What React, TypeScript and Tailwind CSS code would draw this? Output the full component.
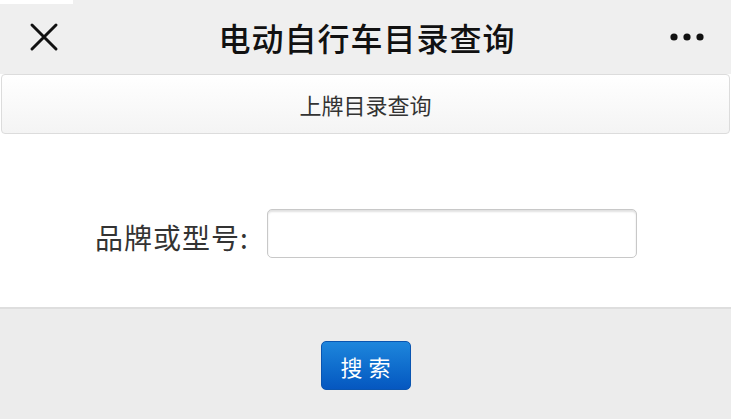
import React from "react";

export default function App() {
  const font = { fontFamily: '"Noto Sans CJK SC", "Noto Sans", sans-serif' };
  return (
    <div className="w-[731px] h-[419px] overflow-hidden bg-white flex flex-col" style={font}>
      <div className="h-[74px] bg-[#efefef] flex items-center justify-between px-[28px] relative shrink-0">
        <div className="absolute left-0 top-0 w-[73px] h-[4px] bg-white" />
        <svg width="30" height="30" viewBox="0 0 30 30" className="ml-[1px]">
          <path d="M3 3 L27 27 M27 3 L3 27" stroke="#111" strokeWidth="3" strokeLinecap="round" />
        </svg>
        <div className="text-[32px] leading-none text-[#111] font-medium tracking-[1px] ml-[6px]">电动自行车目录查询</div>
        <svg width="36" height="10" viewBox="0 0 36 10" className="mr-[-2px]">
          <circle cx="5" cy="5" r="3.6" fill="#111" />
          <circle cx="18" cy="5" r="3.6" fill="#111" />
          <circle cx="31" cy="5" r="3.6" fill="#111" />
        </svg>
      </div>
      <div className="h-[60px] mx-[1px] border border-[#dcdcdc] rounded-[4px] bg-gradient-to-b from-[#ffffff] to-[#f4f4f4] flex items-center justify-center shrink-0">
        <span className="text-[22px] text-[#333] leading-none">上牌目录查询</span>
      </div>
      <div className="h-[173px] bg-white flex items-start pl-[95px] pt-[75px] shrink-0">
        <span className="text-[28px] text-[#333] leading-none mt-[14px] tracking-[1px]">品牌或型号:</span>
        <input
          type="text"
          className="ml-[18px] w-[370px] h-[49px] border border-[#c8c8c8] rounded-[5px] bg-white shadow-[inset_0_2px_2px_rgba(0,0,0,0.12)] outline-none"
        />
      </div>
      <div className="flex-1 bg-[#ececec] border-t-[2px] border-[#dedede] flex justify-center pt-[32px]">
        <button className="w-[90px] h-[49px] rounded-[5px] bg-gradient-to-b from-[#1e86dc] to-[#0657c0] border border-[#0a55b0] text-white text-[22px] leading-none flex items-center justify-center tracking-[6px] pl-[6px]">
          搜索
        </button>
      </div>
    </div>
  );
}
